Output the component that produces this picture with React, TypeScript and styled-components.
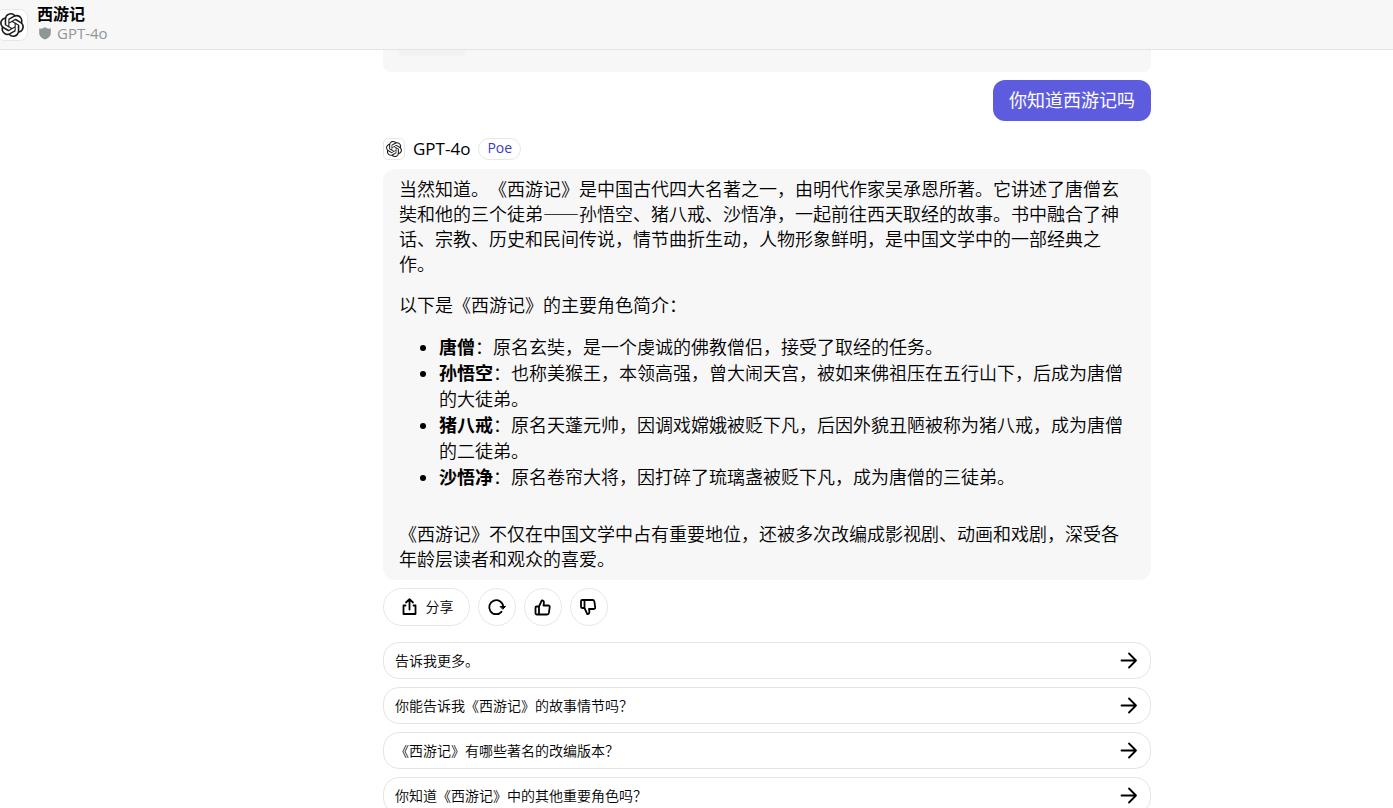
import React from "react";
import styled, { createGlobalStyle } from "styled-components";
import { SiOpenai } from "react-icons/si";

const Global = createGlobalStyle`
  *, *::before, *::after { box-sizing: border-box; }
  body {
    margin: 0;
    background: #fff;
    color: #000;
    font-family: "Open Sans", "Noto Sans CJK SC", sans-serif;
    text-spacing-trim: space-all;
  }
  button { font-family: inherit; color: inherit; cursor: pointer; }
`;

const Shell = styled.div`
  height: 100vh;
  display: flex;
  flex-direction: column;
  overflow: hidden;
`;

const Header = styled.header`
  flex: none;
  display: flex;
  align-items: center;
  gap: 9px;
  height: 50px;
  background: #f7f7f7;
  border-bottom: 1px solid #e3e4e4;
`;

const Avatar = styled.span<{ $size: number; $radius: number }>`
  flex: none;
  display: flex;
  align-items: center;
  justify-content: center;
  width: ${(p) => p.$size}px;
  height: ${(p) => p.$size}px;
  border: 1px solid #e6e7e7;
  border-radius: ${(p) => p.$radius}px;
  background: #fff;
  color: #1c1c1c;
`;

const HeaderAvatar = styled(Avatar)`
  margin-left: -4px;
`;

const HeaderText = styled.div`
  display: flex;
  flex-direction: column;
  padding-bottom: 4px;
`;

const Title = styled.h1`
  margin: 0;
  font-size: 16px;
  line-height: 20px;
  font-weight: 700;
`;

const Subtitle = styled.div`
  display: flex;
  align-items: center;
  gap: 4px;
  font-size: 15px;
  line-height: 18px;
  color: #8e9696;
`;

const Main = styled.main`
  flex: 1;
  min-height: 0;
  overflow: hidden;
  padding-left: 141px;
`;

const Column = styled.div`
  display: flex;
  flex-direction: column;
  max-width: 768px;
  margin: 0 auto;
`;

const EarlierMessage = styled.div`
  height: 22px;
  padding: 0 16px;
  background: #f7f7f7;
  border-radius: 0 0 8px 8px;
`;

const EarlierChip = styled.div`
  width: 66px;
  height: 6px;
  background: #f1f3f3;
  border-radius: 0 0 4px 4px;
`;

const UserMessage = styled.div`
  align-self: flex-end;
  margin-top: 8px;
  padding: 8px 16px;
  border-radius: 12px;
  background: #5d5cde;
  color: #fff;
  font-size: 18px;
  line-height: 25px;
`;

const BotRow = styled.div`
  display: flex;
  align-items: center;
  gap: 8px;
  height: 22px;
  margin: 17px 0 9px;
`;

const BotName = styled.span`
  font-size: 17px;
  line-height: 22px;
`;

const Badge = styled.span`
  height: 22px;
  padding: 0 8px;
  border: 1px solid #e6e7e7;
  border-radius: 11px;
  font-size: 14px;
  line-height: 18px;
  color: #3e3bc4;
`;

const BotMessage = styled.article`
  padding: 8px 16px;
  border-radius: 12px;
  background: #f7f7f7;
  font-size: 18px;
  font-weight: 350;
  line-height: 25px;

  p { margin: 0; }
  strong { font-weight: 700; }
`;

/* The CJK face draws the double dash as one unbroken line. */
const Dash = styled.span`
  font-family: "Noto Sans CJK SC", sans-serif;
  line-height: 1;
`;

const CharacterList = styled.ul`
  margin: 16px 0 32px;
  padding-left: 40px;
  line-height: 26px;
`;

const Intro = styled.p`
  && { margin-top: 16px; }
`;

const Actions = styled.div`
  display: flex;
  gap: 8px;
  margin: 8px 0 16px;
`;

const ActionButton = styled.button<{ $wide?: boolean }>`
  display: flex;
  align-items: center;
  justify-content: center;
  gap: 6px;
  width: ${(p) => (p.$wide ? 87 : 38)}px;
  height: 38px;
  padding: 0;
  border: 1px solid #e6e7e7;
  border-radius: 19px;
  background: #fff;
  font-size: 14px;
  font-weight: 350;
  line-height: 20px;
`;

const Suggestions = styled.div`
  display: flex;
  flex-direction: column;
  gap: 8px;
`;

const Suggestion = styled.button`
  display: flex;
  align-items: center;
  justify-content: space-between;
  height: 37px;
  padding: 0 11px;
  border: 1px solid #e3e4e4;
  border-radius: 16px;
  background: #fff;
  font-size: 14px;
  font-weight: 350;
  line-height: 20px;
  text-align: left;
`;

const Svg = ({ children }: { children: React.ReactNode }) => (
  <svg width="20" height="20" viewBox="0 0 20 20" fill="none" stroke="currentColor" strokeWidth="1.8" strokeLinecap="round" strokeLinejoin="round" aria-hidden="true">
    {children}
  </svg>
);

const ShieldIcon = () => (
  <svg width="16" height="16" viewBox="0 0 16 16" fill="currentColor" aria-hidden="true">
    <path d="M8 2 C6.5 3.4 4.5 4 2.2 3.6 V8 C2.2 11.3 4.8 13.4 8 14.6 C11.2 13.4 13.8 11.3 13.8 8 V3.6 C11.5 4 9.5 3.4 8 2 Z" />
  </svg>
);

const ShareIcon = () => (
  <Svg>
    <path d="M9.5 12.5V2.5M6 5.5L9.5 2.2L13 5.5M5.5 8.5H3.5V17H15.5V8.5H13.5" />
  </Svg>
);

const RetryIcon = () => (
  <Svg>
    <path d="M14.5 14.8A7 7 0 1 1 16.2 9.5" />
    <path d="M13.5 9.5H18.5L16 12Z" fill="currentColor" strokeWidth="1" />
  </Svg>
);

const ThumbUpIcon = () => (
  <Svg>
    <path d="M6 9.5H3.7Q2.5 9.5 2.5 10.7V16.3Q2.5 17.5 3.7 17.5H6ZM6 9.5L8.8 3.4Q11.2 3.6 10.9 5.8L10.5 8.5H15.2Q17 8.6 16.7 10.2L15.9 15.9Q15.6 17.5 14 17.5H6" />
  </Svg>
);

const ThumbDownIcon = () => (
  <Svg>
    <path d="M5.5 11H3.2Q2 11 2 9.8V4.2Q2 3 3.2 3H5.5ZM5.5 11L8.3 17.1Q10.7 16.9 10.4 14.7L10 12H14.7Q16.5 11.9 16.2 10.3L15.4 4.6Q15.1 3 13.5 3H5.5" />
  </Svg>
);

const ArrowIcon = () => (
  <Svg>
    <path d="M2.5 9.5H17M10 2.5L17 9.5L10 16.5" />
  </Svg>
);

const characters = [
  ["唐僧", "原名玄奘，是一个虔诚的佛教僧侣，接受了取经的任务。"],
  ["孙悟空", "也称美猴王，本领高强，曾大闹天宫，被如来佛祖压在五行山下，后成为唐僧的大徒弟。"],
  ["猪八戒", "原名天蓬元帅，因调戏嫦娥被贬下凡，后因外貌丑陋被称为猪八戒，成为唐僧的二徒弟。"],
  ["沙悟净", "原名卷帘大将，因打碎了琉璃盏被贬下凡，成为唐僧的三徒弟。"],
];

const suggestions = [
  "告诉我更多。",
  "你能告诉我《西游记》的故事情节吗？",
  "《西游记》有哪些著名的改编版本？",
  "你知道《西游记》中的其他重要角色吗？",
];

export default function App() {
  return (
    <Shell lang="zh-CN">
      <Global />
      <Header>
        <HeaderAvatar $size={32} $radius={8}>
          <SiOpenai size={24} />
        </HeaderAvatar>
        <HeaderText>
          <Title>西游记</Title>
          <Subtitle>
            <ShieldIcon />
            GPT-4o
          </Subtitle>
        </HeaderText>
      </Header>
      <Main>
        <Column>
          <EarlierMessage>
            <EarlierChip />
          </EarlierMessage>
          <UserMessage>你知道西游记吗</UserMessage>
          <BotRow>
            <Avatar $size={22} $radius={5}>
              <SiOpenai size={16} />
            </Avatar>
            <BotName>GPT-4o</BotName>
            <Badge>Poe</Badge>
          </BotRow>
          <BotMessage>
            <p>
              当然知道。《西游记》是中国古代四大名著之一，由明代作家吴承恩所著。它讲述了唐僧玄奘和他的三个徒弟<Dash>——</Dash>孙悟空、猪八戒、沙悟净，一起前往西天取经的故事。书中融合了神话、宗教、历史和民间传说，情节曲折生动，人物形象鲜明，是中国文学中的一部经典之作。
            </p>
            <Intro>以下是《西游记》的主要角色简介：</Intro>
            <CharacterList>
              {characters.map(([name, text]) => (
                <li key={name}>
                  <strong>{name}</strong>：{text}
                </li>
              ))}
            </CharacterList>
            <p>《西游记》不仅在中国文学中占有重要地位，还被多次改编成影视剧、动画和戏剧，深受各年龄层读者和观众的喜爱。</p>
          </BotMessage>
          <Actions>
            <ActionButton $wide>
              <ShareIcon />
              分享
            </ActionButton>
            <ActionButton aria-label="重试">
              <RetryIcon />
            </ActionButton>
            <ActionButton aria-label="赞">
              <ThumbUpIcon />
            </ActionButton>
            <ActionButton aria-label="踩">
              <ThumbDownIcon />
            </ActionButton>
          </Actions>
          <Suggestions>
            {suggestions.map((text) => (
              <Suggestion key={text}>
                {text}
                <ArrowIcon />
              </Suggestion>
            ))}
          </Suggestions>
        </Column>
      </Main>
    </Shell>
  );
}
